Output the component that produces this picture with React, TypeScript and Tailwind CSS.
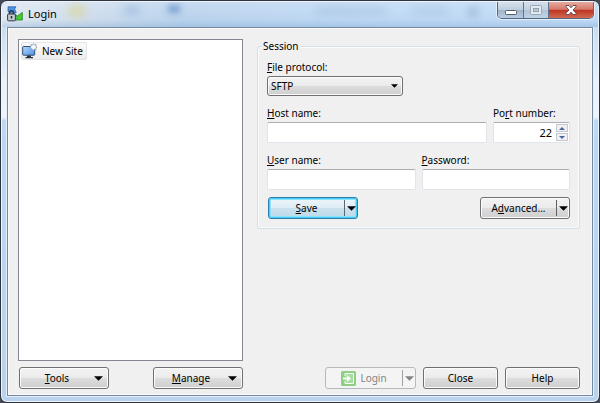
import React from "react";

const buttonFace =
  "border border-[#707070] bg-[linear-gradient(#f3f3f3,#ebebeb_48%,#dddddd_50%,#cfcfcf)] shadow-[inset_0_0_0_1px_#fbfbfb]";
const field =
  "h-[21px] w-full min-w-0 rounded-[2px] border border-[#e2e3ea] border-t-[#abadb3] bg-white px-1 outline-none";

function Caret({ className = "h-[5px] w-[9px]" }: { className?: string }) {
  return (
    <svg viewBox="0 0 10 5" className={`shrink-0 ${className}`} fill="currentColor" aria-hidden="true">
      <path d="M0 0h10L5 5z" />
    </svg>
  );
}

function MenuButton({ children }: { children: React.ReactNode }) {
  return (
    <button className={`flex h-[22px] w-[90px] items-center rounded-[3px] pr-[5px] ${buttonFace}`}>
      <span className="flex-1 text-center">{children}</span>
      <Caret />
    </button>
  );
}

function LoginIcon() {
  return (
    <svg viewBox="0 0 16 16" className="h-4 w-4 shrink-0" aria-hidden="true">
      <path d="M1 .8h8L7.600 3 9.200 6.500 6 8 1 5.500z" fill="#4b93e4" stroke="#2458a0" strokeWidth=".7" />
      <path d="M8 8.500l2.500 1.500L15.300 6.500V14H8l2-2.500z" fill="#46cf32" stroke="#1f7d1b" strokeWidth=".8" />
      <path d="M2.500 9V6.700a2 2 0 0 1 4 0V9" fill="none" stroke="#30343b" strokeWidth="1.500" />
      <rect x=".6" y="8" width="7.800" height="6.800" rx=".8" fill="#c3c7ce" stroke="#343941" />
      <path d="M4.500 10v2.500" stroke="#23272e" strokeWidth="1.500" />
    </svg>
  );
}

function SiteIcon() {
  return (
    <svg viewBox="0 0 16 16" className="h-4 w-4 shrink-0" aria-hidden="true">
      <defs>
        <linearGradient id="screen" x1="0" y1="0" x2="1" y2="1">
          <stop stopColor="#b4d9fc" />
          <stop offset="1" stopColor="#4c90e6" />
        </linearGradient>
      </defs>
      <rect x=".7" y="3.500" width="12" height="8.700" rx=".7" fill="url(#screen)" stroke="#34506f" />
      <path d="M5 12.500h4V14h2v1.200H3.500V14H5z" fill="#26323f" />
      <path d="M11.500.5l.9 1.400 1.700-.4-.4 1.600 1.300 1-1.300 1 .4 1.600-1.700-.4-.9 1.400-.9-1.400-1.700.4.4-1.600-1.300-1 1.300-1-.4-1.600 1.700.4z" fill="#f4f8fc" stroke="#869db3" strokeWidth=".8" />
    </svg>
  );
}

export default function App() {
  return (
    <div className="h-screen bg-[#474b55] font-['Noto_Sans','Open_Sans',sans-serif] text-[10px] leading-[14px] text-black">
      <div className="relative flex h-full flex-col overflow-hidden rounded-[7px] border border-[#30343c] bg-[linear-gradient(#b9d3ed_0px,#eaf2fb_80px,#eef5fc_116px,#bcd8f5_120px,#b9d3ee)] px-[6px] pb-[6px] shadow-[inset_0_0_0_1px_#ecf5ff]">
        <header className="relative -mx-[5px] mt-px flex h-[25px] shrink-0 items-start overflow-hidden rounded-t-[6px] bg-[linear-gradient(90deg,#dbe5f1,#cbdaeb_14%,#b4cfeb_30%,#b9d5f3_60%,#bad6f4)] pl-[5px]">
          <div className="absolute inset-0 bg-[linear-gradient(#ffffff40,#ffffff10_70%,#7da8d050)]" />
          <div className="absolute left-[67px] top-[3px] h-3 w-4 bg-[#dbd276] opacity-50 blur-[4px]" />
          <div className="absolute left-[122px] top-[4px] h-2 w-4 bg-[#7fa9d8] opacity-50 blur-[4px]" />
          <div className="absolute left-[166px] top-[3px] h-2 w-3 bg-[#4d80be] opacity-60 blur-[3px]" />
          <div className="absolute left-[314px] top-[5px] h-2 w-[70px] bg-[#86a8cc] opacity-30 blur-[4px]" />
          <div className="absolute left-[410px] top-[5px] h-2 w-9 bg-[#8eafd2] opacity-30 blur-[4px]" />
          <div className="absolute left-[465px] top-[4px] h-3 w-3 bg-[#7898bb] opacity-30 blur-[3px]" />
          <div className="relative flex items-center gap-[5px] pt-1">
            <LoginIcon />
            <h1 className="text-[11px] leading-4">Login</h1>
          </div>
          <div className="relative ml-auto mr-[4px] flex h-[17px] overflow-hidden rounded-b-[5px] border border-t-0 border-[#536780] text-white shadow-[0_0_0_1px_#ffffff90]">
            <button aria-label="Minimize" className="flex w-[26px] items-center justify-center border-r border-[#60758d] bg-[linear-gradient(#d6e1ed,#bdcedf_48%,#9eb3c9_50%,#b8cde2)] pt-1">
              <svg viewBox="0 0 12 5" className="h-[5px] w-3"><rect x=".5" y=".5" width="11" height="4" rx="1" fill="#fff" stroke="#535d6b" /></svg>
            </button>
            <button aria-label="Maximize" disabled className="flex w-[25px] items-center justify-center border-r border-[#60758d] bg-[linear-gradient(#d4dfeb,#c3d1e0_48%,#b2c3d6_50%,#bfd1e5)]">
              <svg viewBox="0 0 12 10" className="h-[10px] w-3" fill="none"><rect x=".5" y=".5" width="11" height="9" rx="1" fill="#e1e8f0" stroke="#9aa8b8" /><rect x="3.500" y="3.500" width="5" height="3" fill="#b9c7d6" stroke="#93a2b3" /></svg>
            </button>
            <button aria-label="Close window" className="flex w-[44px] items-center justify-center bg-[linear-gradient(#e6aa9e,#d6796a_46%,#bd3421_50%,#d36a50)]">
              <svg viewBox="0 0 12 10" className="h-[10px] w-3"><path d="M1 .5h3l2 2.300L8 .5h3v1.300L8 5l3 3.200v1.300H8L6 7.200 4 9.500H1V8.200L4 5 1 1.800z" fill="#fff" stroke="#5d4150" strokeWidth=".9" /></svg>
            </button>
          </div>
        </header>

        <main className="flex min-h-0 flex-1 flex-col border border-[#74889f] bg-[#f0f0f0] pb-[6px] pl-[10px] pr-3 pt-[11px] shadow-[0_0_0_1px_#e3effb,inset_0_0_0_1px_#fafafa]">
          <div className="flex min-h-0 flex-1 gap-[14px]">
            <ul className="w-[225px] shrink-0 border border-[#828790] bg-white p-[2px]">
              <li className="flex w-fit items-center gap-1 rounded-[2px] border border-[#e4e4e4] bg-[linear-gradient(#fafafa,#ececec)] pr-[3px]">
                <SiteIcon />
                New Site
              </li>
            </ul>

            <fieldset className="min-w-0 flex-1 self-start rounded-[3px] border border-[#d5dfe5] px-[9px] pb-[9px] shadow-[inset_0_0_0_1px_#fbfbfb]">
              <legend className="-ml-[5px] bg-[#f0f0f0] px-px">Session</legend>
              <div className="flex flex-col gap-[10px] pt-[7px]">
                <div className="flex flex-col gap-[2px]">
                  <label htmlFor="protocol"><u>F</u>ile protocol:</label>
                  <div className="relative w-[136px]">
                    <select id="protocol" className={`block h-5 w-full appearance-none rounded-[3px] px-[3px] ${buttonFace}`}>
                      <option>SFTP</option>
                    </select>
                    <Caret className="pointer-events-none absolute right-[5px] top-2 h-1 w-[7px]" />
                  </div>
                </div>
                <div className="flex gap-[6px]">
                  <div className="flex flex-1 flex-col gap-[2px]">
                    <label htmlFor="host"><u>H</u>ost name:</label>
                    <input id="host" type="text" className={field} />
                  </div>
                  <div className="flex w-[77px] flex-col gap-[2px]">
                    <label htmlFor="port">Po<u>r</u>t number:</label>
                    <div className={`${field} flex items-center gap-1`}>
                      <input id="port" type="text" inputMode="numeric" defaultValue="22" className="min-w-0 flex-1 text-right text-[11px] outline-none" />
                      <div className="-mr-[3px] flex w-3 flex-col gap-px text-[#4a63a3]">
                        <button aria-label="Increase port" className="flex h-2 items-center justify-center border border-[#c3c7cf] bg-[#f0f0f0]">
                          <svg viewBox="0 0 6 3" className="h-[3px] w-[6px]" fill="currentColor"><path d="M3 0l3 3H0z" /></svg>
                        </button>
                        <button aria-label="Decrease port" className="flex h-2 items-center justify-center border border-[#c3c7cf] bg-[#f0f0f0]">
                          <svg viewBox="0 0 6 3" className="h-[3px] w-[6px]" fill="currentColor"><path d="M0 0h6L3 3z" /></svg>
                        </button>
                      </div>
                    </div>
                  </div>
                </div>
                <div className="flex gap-[6px]">
                  <div className="flex flex-1 flex-col gap-[2px]">
                    <label htmlFor="user"><u>U</u>ser name:</label>
                    <input id="user" type="text" className={field} />
                  </div>
                  <div className="flex flex-1 flex-col gap-[2px]">
                    <label htmlFor="password"><u>P</u>assword:</label>
                    <input id="password" type="password" className={field} />
                  </div>
                </div>
              </div>
              <div className="flex justify-between pl-px pt-[7px]">
                <div className="flex h-[22px] w-[90px] items-center rounded-[3px] border border-[#2c7fb0] bg-[linear-gradient(#eef5f9,#deedf5_48%,#cbe2ee_50%,#bcd9e8)] shadow-[inset_0_0_0_1px_#45cdf5,inset_0_0_0_2px_#8fe0f8]">
                  <button className="h-full flex-1"><u>S</u>ave</button>
                  <button aria-label="Save options" className="flex h-4 w-[13px] items-center justify-center border-l border-[#5c6870]"><Caret /></button>
                </div>
                <div className={`flex h-[22px] w-[90px] items-center rounded-[3px] ${buttonFace}`}>
                  <button className="h-full flex-1">A<u>d</u>vanced...</button>
                  <button aria-label="Advanced options" className="flex h-4 w-[13px] items-center justify-center border-l border-[#606060]"><Caret /></button>
                </div>
              </div>
            </fieldset>
          </div>

          <footer className="flex shrink-0 pt-[6px]">
            <div className="flex w-[225px] justify-between pl-px">
              <MenuButton><u>T</u>ools</MenuButton>
              <MenuButton><u>M</u>anage</MenuButton>
            </div>
            <div className="ml-auto flex gap-[7px]">
              <div className="flex h-[22px] w-[91px] items-center rounded-[3px] border border-[#b5b9bc] bg-[#f4f4f4] text-[#838383]">
                <button disabled className="flex h-full flex-1 items-center justify-center gap-1">
                  <svg viewBox="0 0 15 15" className="h-[15px] w-[15px]" aria-hidden="true">
                    <rect width="15" height="15" rx="1.500" fill="#8fce84" />
                    <rect x="4" y="3" width="8" height="9" fill="#a9dca0" />
                    <path d="M4 5V2.500h8.500v10H4V10" fill="none" stroke="#f6fff4" />
                    <path d="M2 6.500h4V4l4 3.500L6 11V8.500H2z" fill="#f6fff4" />
                  </svg>
                  Login
                </button>
                <button disabled aria-label="Login options" className="flex h-4 w-[13px] items-center justify-center border-l border-[#a0a0a0]"><Caret /></button>
              </div>
              <button className={`h-[22px] w-[75px] rounded-[3px] ${buttonFace}`}>Close</button>
              <button className={`h-[22px] w-[75px] rounded-[3px] ${buttonFace}`}>Help</button>
            </div>
          </footer>
        </main>
      </div>
    </div>
  );
}
